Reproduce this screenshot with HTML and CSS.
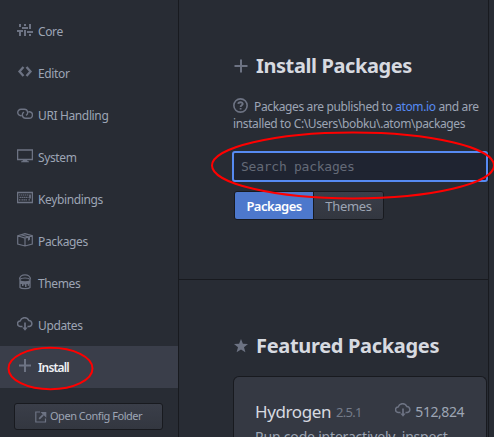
FILE: index.html
```html
<!DOCTYPE html>
<html lang="en">
<head>
<meta charset="utf-8">
<title>Settings</title>
<link rel="stylesheet" href="styles.css">
</head>
<body>
<div class="settings">
  <nav class="sidebar">
    <a class="item"><svg class="icon" viewBox="0 0 16 16"><path d="M3 1v3M3 9v4M8 1v2M8 7v6M13 1v5M13 11v2" stroke-width="2"/><path d="M0 8h6M5 5h6M10 9h6" stroke-width="2"/></svg><span>Core</span></a>
    <a class="item"><svg class="icon" viewBox="0 0 16 16"><path d="M6.500 2L2.500 6.500l4 4.500M9.500 2l4 4.500-4 4.500" stroke-width="2.300"/></svg><span>Editor</span></a>
    <a class="item"><svg class="icon" viewBox="0 0 16 16"><path d="M4.500 8.800H4a3.200 3.200 0 0 1 0-6.500h3.500a3.200 3.200 0 0 1 1.500 6M11.500 4.700h.7a3.200 3.200 0 0 1 0 6.500H8.500a3.200 3.200 0 0 1-1.500-6" stroke-width="1.400"/></svg><span>URI Handling</span></a>
    <a class="item"><svg class="icon" viewBox="0 0 16 16"><path d="M.6 1h14.800v9.500H.6z" stroke-width="1.300"/><path class="fill" d="M6 10.500h4l.4 1.500 1.600.5v.8H4v-.8l1.600-.5z"/></svg><span>System</span></a>
    <a class="item"><svg class="icon" viewBox="0 0 16 16"><path d="M.6 1.500h14.800v10H.6z" stroke-width="1.300"/><path d="M2 4h10M2.500 6.300h9M2 8.800h1.500M4.500 8.800h6M11.500 8.800h2" stroke-width="1.200" stroke-dasharray="1.400 .6"/><path d="M13 3.500v4" stroke-width="1.700"/></svg><span>Keybindings</span></a>
    <a class="item"><svg class="icon" viewBox="0 0 16 16"><path d="M.7 2.800L8 .6l7.300 2.200v8.200L8 13 .7 11zM.7 2.800L8 5l7.300-2.200M8 5v8M4.200 1.700l7.300 2.200v3.500" stroke-width="1.200"/><path d="M11 4.200l2-.5v3l-2 .6z" class="fill"/></svg><span>Packages</span></a>
    <a class="item"><svg class="icon bucket" viewBox="0 0 16 16"><path d="M2.500 5.500C2.500-.8 13.500-.8 13.500 5.500" stroke-width="1.300"/><path d="M3 5.500v8c1.500 1.600 8.500 1.600 10 0v-8" stroke-width="1.300"/><path d="M3 5.500c1.500-2 8.500-2 10 0" stroke-width="1.200"/><path class="fill" d="M3 6.500c3 1 7 1 10 0v3.300h-1v2h-1.300V10H9.500v3H8v-2.500H6.500V12H5v-2H3z"/></svg><span>Themes</span></a>
    <a class="item"><svg class="icon" viewBox="0 0 16 16"><path d="M5.500 9.500h-2a2.800 2.800 0 0 1-.3-5.600 4.600 4.600 0 0 1 8.600-.5 3.100 3.100 0 0 1 .7 6.100h-2" stroke-width="1.500"/><path d="M8 5.500v6" stroke-width="1.700"/><path class="fill" d="M5.300 10.500h5.400L8 13.800z"/></svg><span>Updates</span></a>
    <a class="item active"><svg class="icon" viewBox="0 0 16 16"><path d="M8 0v13M2 6.500h12" stroke-width="2"/></svg><span>Install</span></a>
    <div class="config"><svg class="icon-config" viewBox="0 0 12 12"><path d="M5 1H.8v10h9.700V7.500" stroke-width="1.200"/><path d="M4.200 7.800l4-4" stroke-width="1.800"/><path class="fill" d="M5.500 1h5.800v5.800z"/></svg><span>Open Config Folder</span></div>
  </nav>
  <main class="content">
    <section class="install">
      <h1><svg class="h-icon" viewBox="0 0 14 14"><path d="M7 .5v13M.5 7h13" stroke-width="2"/></svg><span class="h-install">Install Packages</span></h1>
      <div class="note">
        <div class="line"><svg class="q-icon" viewBox="0 0 14 14"><circle cx="7" cy="7" r="6.200" stroke-width="1.500"/><path d="M4.900 5.500C5 3.400 9.200 3.500 9.100 5.500 9 6.800 7.100 6.700 7.100 8.300M7.100 9.300v1.500" stroke-width="1.700"/></svg><span>Packages are published to <a>atom.io</a> and are</span></div>
        <div class="line"><span>installed to C:\Users\bobku\.atom\packages</span></div>
      </div>
      <div class="search">Search packages</div>
      <div class="toggle"><span class="btn selected">Packages</span><span class="btn">Themes</span></div>
    </section>
    <section class="featured">
      <h1><svg class="h-icon" viewBox="0 0 14 14"><path class="fill" d="M7 0l1.900 4.800 5.100.3-4 3.200 1.400 5L7 10.500l-4.400 2.800 1.400-5-4-3.200 5.100-.3z"/></svg><span class="h-featured">Featured Packages</span></h1>
      <article class="card">
        <div class="card-head"><span class="name">Hydrogen</span><span class="version">2.5.1</span><svg class="icon dl" viewBox="0 0 16 16"><path d="M5.500 9.500h-2a2.800 2.800 0 0 1-.3-5.600 4.600 4.600 0 0 1 8.600-.5 3.100 3.100 0 0 1 .7 6.100h-2" stroke-width="1.500"/><path d="M8 5.500v6" stroke-width="1.700"/><path class="fill" d="M5.300 10.500h5.400L8 13.800z"/></svg><span class="count">512,824</span></div>
        <p class="desc">Run code interactively, inspect</p>
      </article>
    </section>
  </main>
</div>
<svg class="marks" viewBox="0 0 494 437"><ellipse cx="50.500" cy="368.500" rx="42" ry="20.700"/><ellipse cx="353" cy="165.500" rx="141" ry="33"/></svg>
</body>
</html>
```
FILE: styles.css
```css
* { box-sizing: border-box; }
body {
  margin: 0;
  width: 494px;
  height: 437px;
  overflow: hidden;
  background: #282c34;
  color: #9da5b4;
  font-family: "Noto Sans", "Open Sans", sans-serif;
  font-size: 12px;
  letter-spacing: -0.37px;
}
svg { fill: none; stroke: #6d7383; flex: none; }
.fill { fill: #6d7383; stroke: none; }
.settings { display: flex; height: 437px; overflow: hidden; }
.sidebar { width: 179px; flex: none; padding-top: 10px; border-right: 1px solid #181a1f; }
.item { display: flex; height: 42px; align-items: center; padding-left: 17px; white-space: nowrap; }
.icon { width: 16px; height: 16px; margin-right: 5px; }
.bucket { margin-bottom: 2px; }
.active { background: #3a3e4a; color: #eef0f4; font-weight: 600; letter-spacing: -0.85px; }
.config {
  display: flex;
  align-items: center;
  width: 149px;
  height: 27px;
  margin: 15px 0 0 14px;
  padding: 0 0 3px 20px;
  border: 1px solid #181a1f;
  border-radius: 3px;
  background: linear-gradient(#3a3e49, #333740);
  font-size: 11px;
  letter-spacing: -0.47px;
  white-space: nowrap;
}
.icon-config { width: 12px; height: 12px; margin: 3px 3px 0 0; }
.content { width: 310px; flex: none; border-right: 1px solid #181a1f; }
.install { height: 280px; padding: 49px 0 0 54px; border-bottom: 1px solid #181a1f; }
h1 { display: flex; align-items: center; height: 32px; margin: 0; color: #d7dae0; font-size: 20px; font-weight: 700; white-space: nowrap; }
.h-icon { width: 14px; height: 14px; margin: 2px 8px 0 1px; }
.h-install { letter-spacing: -0.4px; }
.h-featured { letter-spacing: -0.32px; }
.note { margin-top: 17px; }
.line { display: flex; height: 17px; align-items: center; white-space: nowrap; }
.q-icon { width: 15px; height: 15px; margin: -3px 6px 0 0; }
.note a { color: #568af2; }
.search {
  width: 256px;
  height: 31px;
  margin: 19px 0 0 -1px;
  padding-left: 7px;
  border: 2px solid #568af2;
  border-radius: 3px;
  background: #1f2431;
  color: #646a77;
  font: 13px/27px "DejaVu Sans Mono", monospace;
  letter-spacing: -0.25px;
}
.toggle { display: flex; width: 150px; height: 29px; margin: 9px 0 0 1px; border: 1px solid #181a1f; border-radius: 3px; overflow: hidden; }
.btn { flex: 1; text-align: center; line-height: 28px; font-size: 13px; letter-spacing: -0.3px; background: linear-gradient(#3a3e49, #333740); }
.selected { flex: none; width: 79px; border-right: 1px solid #181a1f; background: #4d78cc; color: #fff; font-weight: 600; letter-spacing: -0.55px; }
.featured { padding: 49px 0 0 54px; }
.card { width: 254px; height: 61px; margin-top: 15px; padding: 22px 22px 0 21px; border: 1px solid #181a1f; border-bottom: 0; border-radius: 6px 6px 0 0; background: #353943; }
.card-head { display: flex; align-items: center; height: 24px; }
.name { color: #d7dae0; font-size: 17px; letter-spacing: -0.4px; }
.version { margin: 2px 0 0 5px; color: #747b89; font-size: 13px; letter-spacing: -0.7px; }
.dl { margin: 0 4px 0 auto; }
.count { font-size: 14px; letter-spacing: -0.45px; }
.desc { margin: 4px 0 0; font-size: 14px; line-height: 20px; letter-spacing: -0.2px; white-space: nowrap; }
.marks { position: absolute; inset: 0; width: 494px; height: 437px; stroke: #ff0000; stroke-width: 2; }
```
